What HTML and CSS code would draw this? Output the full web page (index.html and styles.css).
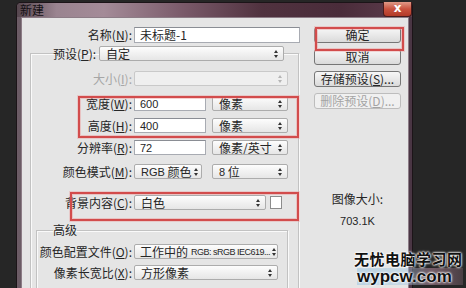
FILE: index.html
```html
<!DOCTYPE html>
<html lang="zh-CN">
<head>
  <meta charset="UTF-8">
  <title>新建</title>
  <link rel="stylesheet" href="styles.css">
</head>
<body>
  <div class="dialog">
    <div class="titlebar">
      <span class="title">新建</span>
      <span class="close">x</span>
    </div>
    <div class="client">
      <div class="left">
        <div class="row name-row">
          <label class="lbl">名称(<u>N</u>):</label>
          <div class="input name-input">未标题-1</div>
        </div>

        <fieldset class="group preset">
          <legend>
            <label>预设(<u>P</u>):</label>
            <div class="combo preset-combo">自定<i class="arr"></i></div>
          </legend>

          <div class="row r-size disabled">
            <label class="lbl">大小(<u>I</u>):</label>
            <div class="combo off size-combo"><i class="arr"></i></div>
          </div>
          <div class="row r-width">
            <label class="lbl">宽度(<u>W</u>):</label>
            <div class="input num">600</div>
            <div class="combo unit">像素<i class="arr"></i></div>
          </div>
          <div class="row r-height">
            <label class="lbl">高度(<u>H</u>):</label>
            <div class="input num">400</div>
            <div class="combo unit">像素<i class="arr"></i></div>
          </div>
          <div class="row r-res">
            <label class="lbl">分辨率(<u>R</u>):</label>
            <div class="input num">72</div>
            <div class="combo unit">像素/英寸<i class="arr"></i></div>
          </div>
          <div class="row r-mode">
            <label class="lbl">颜色模式(<u>M</u>):</label>
            <div class="combo mode-combo"><span class="lat">RGB</span>&nbsp;颜色<i class="arr"></i></div>
            <div class="combo unit bits"><span class="lat">8</span>&nbsp;位<i class="arr"></i></div>
          </div>
          <div class="row r-bg">
            <label class="lbl">背景内容(<u>C</u>):</label>
            <div class="combo bg-combo">白色<i class="arr"></i></div>
            <div class="swatch"></div>
          </div>

          <fieldset class="group advanced">
            <legend>高级</legend>
            <div class="row r-profile">
              <label class="lbl">颜色配置文件(<u>O</u>):</label>
              <div class="combo wide-combo profile">工作中的<span class="lat small">RGB: sRGB IEC619...</span><i class="arr"></i></div>
            </div>
            <div class="row r-aspect">
              <label class="lbl">像素长宽比(<u>X</u>):</label>
              <div class="combo wide-combo">方形像素<i class="arr"></i></div>
            </div>
          </fieldset>
        </fieldset>
      </div>

      <div class="right">
        <div class="btn">确定</div>
        <div class="btn">取消</div>
        <div class="btn">存储预设(<u>S</u>)...</div>
        <div class="btn off">删除预设(<u>D</u>)...</div>
        <div class="img-size">
          <div>图像大小:</div>
          <div class="lat size-val">703.1K</div>
        </div>
      </div>
    </div>
  </div>

  <!-- annotation boxes drawn over the dialog -->
  <div class="mark mark-size"></div>
  <div class="mark mark-bg"></div>
  <div class="mark mark-ok"></div>

  <div class="watermark">
    <div class="wm-cn">无忧电脑学习网</div>
    <div class="wm-en">wypcw.com</div>
  </div>
</body>
</html>
```

FILE: styles.css
```css
* {
  box-sizing: border-box;
}
body {
  margin: 0;
  width: 466px;
  height: 288px;
  overflow: hidden;
  position: relative;
  background: #262626;
  font-family: "Noto Sans CJK SC", sans-serif;
  font-size: 12px;
  line-height: 14px;
  color: #262626;
}
u {
  text-decoration: underline;
  text-underline-offset: 1px;
}
.lat {
  font-family: "Liberation Sans", Arial, sans-serif;
  font-size: 11px;
}
.lat.small {
  font-size: 9px;
  letter-spacing: -0.5px;
  margin-left: 3px;
}

/* window frame */
.dialog {
  margin: 2px 0 0 16px;
  width: 397px;
  height: 300px;
  background: linear-gradient(90deg, #6c5c66, #4e3c48 30%, #4a3644);
  border: 1px solid #1c1418;
  border-bottom: 0;
  border-radius: 5px 5px 0 0;
  display: flex;
  flex-direction: column;
}
.titlebar {
  height: 18px;
  display: flex;
  align-items: center;
  border-radius: 4px 4px 0 0;
  background: linear-gradient(90deg, #55464e 0%, #9a8490 10%, #a48b98 22%, #7a5a6a 42%, #50323f 62%, #4a2c3a 82%, #5e3e4e 100%);
}
.title {
  padding-left: 3px;
  color: #141014;
  font-size: 12px;
}
.close {
  margin-left: auto;
  margin-right: 0;
  align-self: flex-start;
  margin-top: -1px;
  width: 29px;
  height: 15px;
  border: 1px solid #4a1c1c;
  border-top: 0;
  border-radius: 0 0 4px 4px;
  background: linear-gradient(180deg, #e09a88, #c9523e 50%, #b23a28);
  color: #fff;
  font-family: "DejaVu Sans", sans-serif;
  font-weight: bold;
  font-size: 12px;
  line-height: 12px;
  text-align: center;
}
.client {
  flex: 1;
  margin: 0 3px 0 4px;
  background: #e5e5e5;
  border: 1px solid #8c7c86;
  border-bottom: 0;
  display: flex;
  padding-top: 9px;
}

/* left column */
.left {
  width: 282px;
}
.row {
  display: flex;
  align-items: center;
  height: 15px;
}
.lbl {
  width: 101px;
  text-align: right;
  white-space: nowrap;
  flex: none;
}
.name-row {
  height: 16px;
}
.name-row .lbl {
  width: 110px;
}
.advanced .lbl {
  width: 95px;
}
.disabled .lbl {
  color: #a6a6a6;
}

.input {
  height: 100%;
  margin-left: 2px;
  background: #fff;
  border: 1px solid #a8abb2;
  border-top-color: #8a8d94;
  padding: 0 5px;
  display: flex;
  align-items: center;
  white-space: nowrap;
}
.name-input {
  width: 166px;
}
.num {
  width: 72px;
  font-family: "Liberation Sans", Arial, sans-serif;
  font-size: 11px;
}

.combo {
  height: 100%;
  margin-left: 2px;
  display: flex;
  align-items: center;
  padding: 0 5px 0 6px;
  border: 1px solid #acacac;
  border-radius: 2px;
  background: linear-gradient(180deg, #fdfdfd, #f1f1f1 50%, #e6e6e6);
  white-space: nowrap;
  overflow: hidden;
}
.combo.off {
  background: #efefef;
  border-color: #c9c9c9;
}
.combo.profile {
  padding-left: 5px;
}
.arr {
  margin-left: auto;
  padding-left: 2px;
  display: flex;
  flex-direction: column;
  gap: 2px;
  flex: none;
}
.arr::before,
.arr::after {
  content: "";
  border-left: 2.5px solid transparent;
  border-right: 2.5px solid transparent;
}
.arr::before {
  border-bottom: 3px solid #333;
}
.arr::after {
  border-top: 3px solid #333;
}
.off .arr::before {
  border-bottom-color: #b5b5b5;
}
.off .arr::after {
  border-top-color: #b5b5b5;
}

.preset-combo {
  width: 185px;
}
.size-combo {
  width: 154px;
}
.unit {
  width: 76px;
  margin-left: 6px;
}
.mode-combo {
  width: 68px;
}
.bits {
  margin-left: 10px;
}
.bg-combo {
  width: 132px;
}
.swatch {
  width: 12px;
  height: 13px;
  margin-left: 4px;
  background: #fff;
  border: 1px solid #8c8c8c;
}
.wide-combo {
  width: 144px;
}

/* group boxes */
.group {
  margin: 0;
  padding: 0;
  min-width: 0;
  border: 1px solid #c2c2c2;
  box-shadow: inset 1px 1px 0 #fafafa, 1px 1px 0 #fafafa;
}
.group legend {
  padding: 0;
  display: flex;
  align-items: center;
}
.preset {
  margin: 3px 0 0 8px;
  width: 269px;
  height: 260px;
}
.preset > legend {
  margin-left: 22px;
  height: 15px;
}
.preset > legend label {
  margin-right: 1px;
}
.r-size {
  margin-top: 10px;
}
.r-width {
  margin-top: 10px;
}
.r-height {
  margin-top: 7px;
}
.r-res {
  margin-top: 7px;
}
.r-mode {
  margin-top: 9px;
}
.r-bg {
  margin-top: 16px;
}
.advanced {
  margin: 13px 0 0 5px;
  width: 252px;
  height: 80px;
}
.advanced > legend {
  margin-left: 16px;
  height: 14px;
}
.r-profile {
  margin-top: 7px;
}
.r-aspect {
  margin-top: 6px;
}

/* right column */
.right {
  margin-left: 10px;
  width: 87px;
  display: flex;
  flex-direction: column;
}
.btn {
  height: 16px;
  margin-bottom: 6px;
  border: 1px solid #767676;
  border-radius: 3px;
  background: linear-gradient(180deg, #f7f7f7, #e9e9e9 50%, #dadada);
  display: flex;
  align-items: center;
  justify-content: center;
  white-space: nowrap;
}
.btn.off {
  color: #a4a4a4;
  border-color: #bdbdbd;
  background: #f0f0f0;
}
.img-size {
  margin-top: 77px;
  text-align: center;
}
.size-val {
  margin-top: 8px;
}

/* red annotation boxes */
.mark {
  position: absolute;
  border: 2px solid #d24c4c;
  box-shadow: inset 0 0 0 1px rgba(236, 150, 150, 0.45), 0 0 0 1px rgba(236, 150, 150, 0.35);
}
.mark-size {
  left: 78px;
  top: 96px;
  width: 221px;
  height: 42px;
}
.mark-bg {
  left: 70px;
  top: 192px;
  width: 229px;
  height: 29px;
}
.mark-ok {
  left: 315px;
  top: 27px;
  width: 89px;
  height: 24px;
}

/* watermark */
.watermark {
  position: absolute;
  left: 354px;
  top: 250px;
  font-weight: bold;
  color: #111;
  text-shadow: 0 0 2px #fff, 0 0 2px #fff, 0 0 3px #fff;
}
.wm-cn {
  font-size: 15px;
  line-height: 18px;
  letter-spacing: 0.5px;
}
.wm-en {
  font-family: "Liberation Sans", Arial, sans-serif;
  font-size: 17px;
  line-height: 17px;
  margin-left: 3px;
  background: linear-gradient(90deg, rgba(150, 195, 225, 0.55) 0%, rgba(150, 195, 225, 0.4) 45%, rgba(215, 160, 185, 0.45) 70%, rgba(215, 160, 185, 0.2) 100%);
}
```
